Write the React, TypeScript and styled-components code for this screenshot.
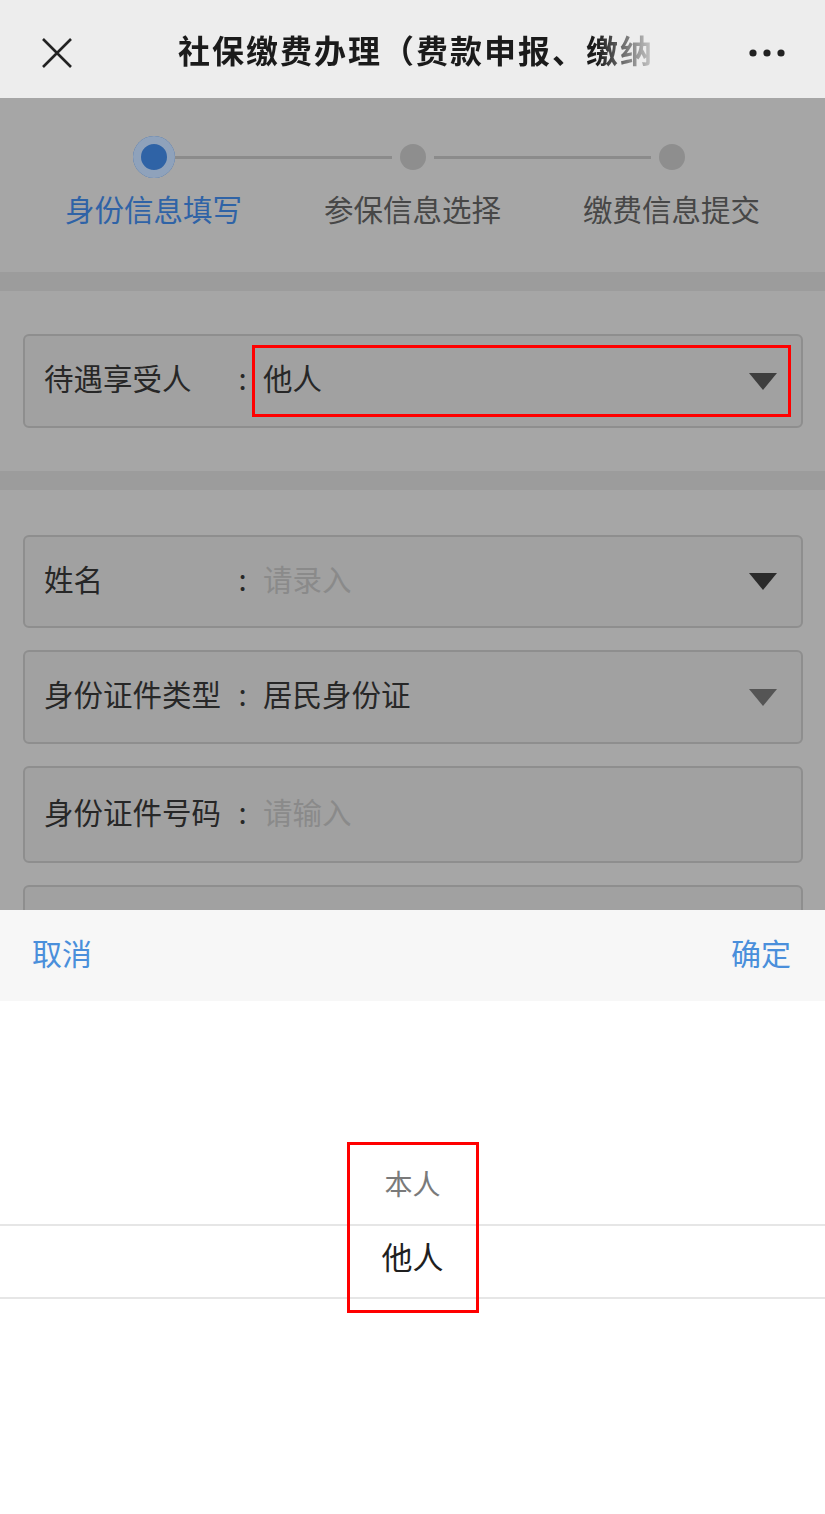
import React from "react";
import styled, { createGlobalStyle } from "styled-components";

const Global = createGlobalStyle`
  html, body { margin: 0; padding: 0; background: #ffffff; }
  body { font-family: "Noto Sans CJK SC", "Noto Sans", sans-serif; }
  * { box-sizing: border-box; }
`;

const Screen = styled.div`
  width: 825px;
  height: 1514px;
  display: flex;
  flex-direction: column;
  overflow: hidden;
`;

const NavBar = styled.div`
  height: 98px;
  flex: none;
  background: #ededed;
  display: grid;
  grid-template-columns: 140px 1fr 140px;
  align-items: center;
  padding-top: 7px;
`;

const NavIconBox = styled.div<{ $align: "start" | "end" }>`
  display: flex;
  justify-content: ${(p) => (p.$align === "start" ? "flex-start" : "flex-end")};
  padding: ${(p) => (p.$align === "start" ? "0 0 0 40px" : "0 40px 0 0")};
  align-items: center;
`;

const Title = styled.div`
  justify-self: start;
  margin-left: 38px;
  white-space: nowrap;
  font-size: 32px;
  line-height: 40px;
  padding-bottom: 8px;
  font-weight: 700;
  letter-spacing: 2px;
  color: #1b1b1b;
  -webkit-mask-image: linear-gradient(to right, #000 88%, rgba(0,0,0,0.15) 100%);
  mask-image: linear-gradient(to right, #000 88%, rgba(0,0,0,0.15) 100%);
`;

const Content = styled.div`
  height: 812px;
  flex: none;
  overflow: hidden;
  background: #a6a6a6;
  display: flex;
  flex-direction: column;
`;

const Steps = styled.div`
  height: 174px;
  flex: none;
  padding: 37px 24px 0;
  display: grid;
  grid-template-columns: repeat(3, 1fr);
`;

const Step = styled.div`
  display: flex;
  flex-direction: column;
  align-items: center;
`;

const DotRow = styled.div`
  width: 100%;
  height: 44px;
  display: grid;
  grid-template-columns: 1fr auto 1fr;
  align-items: center;
`;

const Track = styled.div<{ $show: boolean }>`
  height: 3px;
  background: ${(p) => (p.$show ? "#8b8b8b" : "transparent")};
`;

const Dot = styled.div<{ $active: boolean }>`
  width: ${(p) => (p.$active ? "42px" : "26px")};
  height: ${(p) => (p.$active ? "42px" : "26px")};
  margin: ${(p) => (p.$active ? "0" : "0 8px")};
  border-radius: 50%;
  background: ${(p) => (p.$active ? "#2f63a6" : "#8e8e8e")};
  box-shadow: ${(p) => (p.$active ? "inset 0 0 0 8px #8fa2bb" : "none")};
`;

const StepLabel = styled.div<{ $active: boolean }>`
  margin-top: 9px;
  font-size: 29.5px;
  line-height: 40px;
  color: ${(p) => (p.$active ? "#2f63a6" : "#474747")};
  white-space: nowrap;
`;

const Band = styled.div`
  height: 19px;
  flex: none;
  background: #9c9c9c;
`;

const Section = styled.div<{ $pt: number; $pb: number }>`
  flex: none;
  padding: ${(p) => `${p.$pt}px 22px ${p.$pb}px 23px`};
  display: flex;
  flex-direction: column;
  gap: 22px;
`;

const Field = styled.div<{ $h: number }>`
  height: ${(p) => p.$h}px;
  flex: none;
  border: 2px solid #8e8e8e;
  border-radius: 6px;
  background: #a1a1a1;
  display: flex;
  align-items: center;
  padding: 0 10px 0 19px;
  font-size: 29.5px;
  line-height: 40px;
  color: #272727;
`;

const Label = styled.div`
  width: 182px;
  flex: none;
  white-space: nowrap;
  padding-bottom: 8px;
`;

const Colon = styled.div`
  width: 33px;
  flex: none;
  text-align: center;
  padding-bottom: 8px;
`;

const Value = styled.div<{ $boxed?: boolean; $placeholder?: boolean }>`
  flex: 1;
  height: 72px;
  display: flex;
  align-items: center;
  justify-content: space-between;
  padding: 0 11px 0 8px;
  margin-left: -7px;
  border: 3px solid ${(p) => (p.$boxed ? "#ff0000" : "transparent")};
  color: ${(p) => (p.$placeholder ? "#8a8a8a" : "#272727")};
`;

const ValueText = styled.span`
  padding-bottom: 8px;
`;

const Caret = styled.div<{ $tone: string }>`
  width: 0;
  height: 0;
  border-left: 14px solid transparent;
  border-right: 14px solid transparent;
  border-top: 17px solid ${(p) => p.$tone};
`;

const Sheet = styled.div`
  flex: 1;
  display: flex;
  flex-direction: column;
  background: #ffffff;
`;

const SheetBar = styled.div`
  height: 91px;
  flex: none;
  background: #f7f7f7;
  display: flex;
  align-items: center;
  justify-content: space-between;
  padding: 0 34px 0 32px;
`;

const BarButton = styled.div`
  font-size: 30px;
  line-height: 40px;
  padding-bottom: 8px;
  color: #4a8fdb;
`;

const Picker = styled.div`
  position: relative;
  flex: 1;
  display: flex;
  justify-content: center;
  padding-top: 141px;
`;

const Indicator = styled.div`
  position: absolute;
  left: 0;
  right: 0;
  top: 223px;
  height: 75px;
  border-top: 2px solid #e6e6e6;
  border-bottom: 2px solid #e6e6e6;
`;

const PickBox = styled.div`
  position: relative;
  width: 132px;
  height: 171px;
  border: 3.5px solid #ff0000;
  display: flex;
  flex-direction: column;
  align-items: center;
  padding-top: 1px;
`;

const PickItem = styled.div<{ $selected: boolean }>`
  height: 73px;
  display: flex;
  align-items: center;
  justify-content: center;
  font-size: ${(p) => (p.$selected ? "31px" : "28px")};
  color: ${(p) => (p.$selected ? "#1f1f1f" : "#7a7a7a")};
  white-space: nowrap;
`;

const steps = ["身份信息填写", "参保信息选择", "缴费信息提交"];

export default function App() {
  return (
    <>
      <Global />
      <Screen>
        <NavBar>
          <NavIconBox $align="start">
            <svg width="34" height="34" viewBox="0 0 34 34">
              <path d="M3 3 L31 31 M31 3 L3 31" stroke="#222" strokeWidth="2.6" fill="none" />
            </svg>
          </NavIconBox>
          <Title>社保缴费办理（费款申报、缴纳</Title>
          <NavIconBox $align="end">
            <svg width="36" height="10" viewBox="0 0 36 10">
              <circle cx="4" cy="5" r="3.6" fill="#222" />
              <circle cx="18" cy="5" r="3.6" fill="#222" />
              <circle cx="32" cy="5" r="3.6" fill="#222" />
            </svg>
          </NavIconBox>
        </NavBar>

        <Content>
          <Steps>
            {steps.map((s, i) => (
              <Step key={s}>
                <DotRow>
                  <Track $show={i > 0} />
                  <Dot $active={i === 0} />
                  <Track $show={i < steps.length - 1} />
                </DotRow>
                <StepLabel $active={i === 0}>{s}</StepLabel>
              </Step>
            ))}
          </Steps>
          <Band />
          <Section $pt={43} $pb={43}>
            <Field $h={94}>
              <Label>待遇享受人</Label>
              <Colon>:</Colon>
              <Value $boxed>
                <ValueText>他人</ValueText>
                <Caret $tone="#3e3e3e" />
              </Value>
            </Field>
          </Section>
          <Band />
          <Section $pt={45} $pb={0}>
            <Field $h={93}>
              <Label>姓名</Label>
              <Colon>:</Colon>
              <Value $placeholder>
                <ValueText>请录入</ValueText>
                <Caret $tone="#2b2b2b" />
              </Value>
            </Field>
            <Field $h={94}>
              <Label>身份证件类型</Label>
              <Colon>:</Colon>
              <Value>
                <ValueText>居民身份证</ValueText>
                <Caret $tone="#555555" />
              </Value>
            </Field>
            <Field $h={97}>
              <Label>身份证件号码</Label>
              <Colon>:</Colon>
              <Value $placeholder>
                <ValueText>请输入</ValueText>
              </Value>
            </Field>
            <Field $h={94} />
          </Section>
        </Content>

        <Sheet>
          <SheetBar>
            <BarButton>取消</BarButton>
            <BarButton>确定</BarButton>
          </SheetBar>
          <Picker>
            <Indicator />
            <PickBox>
              <PickItem $selected={false}>本人</PickItem>
              <PickItem $selected>他人</PickItem>
            </PickBox>
          </Picker>
        </Sheet>
      </Screen>
    </>
  );
}
